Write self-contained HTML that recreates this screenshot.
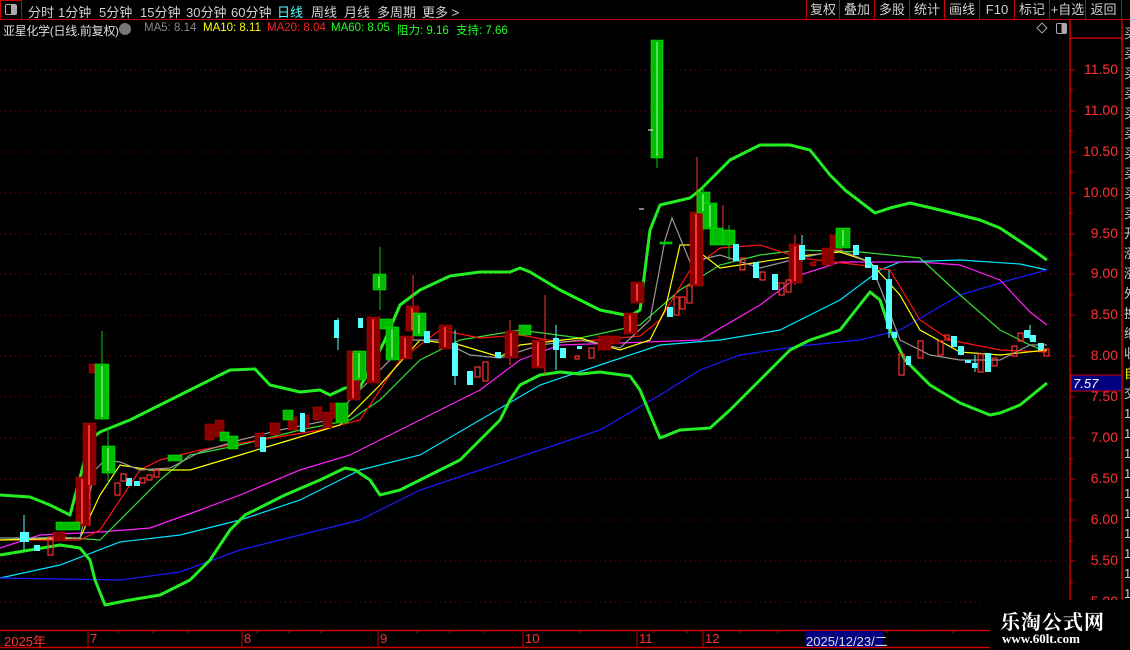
<!DOCTYPE html>
<html><head><meta charset="utf-8"><style>
*{margin:0;padding:0;box-sizing:border-box}
body{width:1130px;height:650px;background:#000;overflow:hidden;position:relative;font-family:"Liberation Sans","Noto Sans CJK SC",sans-serif;color:#c8c8c8}
.tb{position:absolute;left:0;top:0;width:1130px;height:20px;border-bottom:1px solid #c00}
.tb span{position:absolute;top:2px;font-size:13px;color:#d0d0d0}
.btn{position:absolute;top:0;height:19px;border-left:1px solid #c00;font-size:13px;color:#d0d0d0;text-align:center;line-height:19px}
.info{position:absolute;top:22px;font-size:11.5px;white-space:nowrap}
.ax{position:absolute;right:12px;font-size:14px;color:#ff3333;text-align:right;width:50px}
.bt{position:absolute;top:631px;font-size:13px;color:#ff3333}
</style></head><body>
<div class="tb">
<div style="position:absolute;left:0;top:0;width:22px;height:20px;border:1px solid #c00"></div>
<div style="position:absolute;left:5px;top:4px;width:12px;height:11px;border:1px solid #aaa;border-radius:2px;background:linear-gradient(90deg,#000 50%,#aaa 50%)"></div>
<span style="left:28px">分时</span><span style="left:58px">1分钟</span><span style="left:99px">5分钟</span><span style="left:140px">15分钟</span><span style="left:186px">30分钟</span><span style="left:231px">60分钟</span><span style="left:277px;color:#5ff">日线</span><span style="left:311px">周线</span><span style="left:344px">月线</span><span style="left:377px">多周期</span><span style="left:422px">更多 &gt;</span>
<div class="btn" style="left:806px;width:33px">复权</div><div class="btn" style="left:839px;width:35px">叠加</div><div class="btn" style="left:874px;width:35px">多股</div><div class="btn" style="left:909px;width:35px">统计</div><div class="btn" style="left:944px;width:35px">画线</div><div class="btn" style="left:979px;width:35px">F10</div><div class="btn" style="left:1014px;width:35px">标记</div><div class="btn" style="left:1049px;width:36px">+自选</div><div class="btn" style="left:1085px;width:37px;border-right:1px solid #c00">返回</div>
</div>
<div class="info" style="left:3px;color:#ddd;font-size:12px;top:22px;letter-spacing:-0.3px">亚星化学(日线.前复权)</div>
<div style="position:absolute;left:119px;top:23px;width:12px;height:12px;border-radius:50%;background:#777"></div>
<div class="info" style="left:144px;color:#888">MA5: 8.14</div>
<div class="info" style="left:203px;color:#ff0">MA10: 8.11</div>
<div class="info" style="left:267px;color:#f22">MA20: 8.04</div>
<div class="info" style="left:331px;color:#2f2">MA60: 8.05</div>
<div class="info" style="left:397px;color:#2f2">阻力: 9.16</div>
<div class="info" style="left:456px;color:#2f2">支持: 7.66</div>
<div style="position:absolute;left:1038px;top:24px;width:8px;height:8px;border:1px solid #aaa;transform:rotate(45deg)"></div>
<div style="position:absolute;left:1056px;top:23px;width:11px;height:11px;border:1px solid #aaa;border-radius:2px;background:linear-gradient(90deg,#000 50%,#aaa 50%)"></div>

<svg width="1130" height="650" style="position:absolute;left:0;top:0">
<g stroke="#900" stroke-dasharray="1,4" stroke-width="1">
<line x1="0" y1="70" x2="1070" y2="70"/><line x1="0" y1="111" x2="1070" y2="111"/><line x1="0" y1="152" x2="1070" y2="152"/><line x1="0" y1="193" x2="1070" y2="193"/><line x1="0" y1="234" x2="1070" y2="234"/><line x1="0" y1="274" x2="1070" y2="274"/><line x1="0" y1="315" x2="1070" y2="315"/><line x1="0" y1="356" x2="1070" y2="356"/><line x1="0" y1="397" x2="1070" y2="397"/><line x1="0" y1="438" x2="1070" y2="438"/><line x1="0" y1="479" x2="1070" y2="479"/><line x1="0" y1="520" x2="1070" y2="520"/><line x1="0" y1="561" x2="1070" y2="561"/><line x1="0" y1="602" x2="1070" y2="602"/>
</g>
<g stroke="#c00" stroke-width="1.5">
<line x1="1070" y1="20" x2="1070" y2="630"/><line x1="1122" y1="20" x2="1122" y2="650"/>
<line x1="0" y1="630.5" x2="1070" y2="630.5"/><line x1="0" y1="647.5" x2="990" y2="647.5"/>
<line x1="1070" y1="38" x2="1122" y2="38"/>
</g>
<g stroke="#c00">
<path d="M1070 70h5M1070 111h5M1070 152h5M1070 193h5M1070 234h5M1070 274h5M1070 315h5M1070 356h5M1070 397h5M1070 438h5M1070 479h5M1070 520h5M1070 561h5M1070 602h5M1070 90h3M1070 131h3M1070 172h3M1070 213h3M1070 254h3M1070 295h3M1070 336h3M1070 377h3M1070 418h3M1070 459h3M1070 500h3M1070 541h3M1070 582h3"/>
<path d="M88 630v17M242 630v17M378 630v17M523 630v17M637 630v17M703 630v17M118 630v3M153 630v3M188 630v3M257 630v3M289 630v3M321 630v3M417 630v3M450 630v3M483 630v3M580 630v3M608 630v3M654 630v3M687 630v3M740 630v3M778 630v3M887 630v3M920 630v3M953 630v3"/>
</g>
<g fill="none" stroke-width="1.2">
<polyline stroke="#00e5ff" points="0,578 60,565 120,542 180,535 240,520 300,500 360,470 420,455 480,420 540,385 600,365 660,345 720,340 780,330 840,300 880,270 900,262 960,260 1020,264 1047,270"/>
<polyline stroke="#1a1aff" points="0,578 120,580 180,572 240,550 300,535 360,520 420,490 480,470 540,450 600,430 660,395 700,370 740,355 800,346 860,340 900,330 960,295 1010,280 1047,270"/>
<polyline stroke="#f2f" points="0,548 40,535 100,532 150,528 200,510 240,495 300,470 350,455 400,430 440,410 480,390 520,360 560,345 620,343 700,340 760,305 800,275 840,262 880,262 920,262 960,265 1000,280 1030,312 1047,325"/>
<polyline stroke="#3d3" points="0,540 60,537 100,540 130,510 160,480 190,455 240,445 300,430 350,420 380,400 420,360 460,340 520,330 580,338 640,325 680,290 720,265 760,255 800,250 860,252 920,258 960,295 1000,330 1030,345 1047,352"/>
<polyline stroke="#f11" points="0,540 80,540 100,530 120,500 140,470 160,460 200,450 260,440 320,430 360,420 400,360 440,330 480,338 520,335 560,342 600,340 640,336 660,320 690,270 720,248 760,245 800,258 860,265 890,270 920,320 950,340 1000,350 1047,352"/>
<polyline stroke="#ff0" points="0,540 80,538 100,495 120,465 150,470 190,470 240,455 290,440 340,425 360,405 380,385 420,340 460,345 500,357 520,345 580,338 620,350 650,340 665,310 680,245 690,245 720,268 760,262 800,256 840,252 870,262 900,295 920,330 960,352 1000,355 1047,350"/>
<polyline stroke="#999" points="0,538 80,538 95,470 105,460 120,462 140,470 170,468 200,452 240,440 280,430 330,420 360,390 380,370 410,340 440,340 470,355 500,358 540,345 580,340 620,348 650,320 665,240 672,218 690,262 720,255 760,268 800,258 840,250 870,262 885,300 900,340 930,355 960,360 1000,360 1030,345 1047,345"/>
</g>
<g fill="none" stroke="#2e2" stroke-width="3" stroke-linejoin="round">
<polyline points="0,495 30,497 50,505 70,515 90,440 100,432 130,420 160,405 200,385 230,370 255,369 270,385 300,392 320,390 330,395 345,388 360,387 375,360 385,340 400,305 420,290 450,276 480,272 510,272 520,268 530,272 560,290 580,300 600,310 630,316 640,310 650,230 660,205 690,198 700,190 730,160 760,145 790,145 810,150 830,175 845,190 875,213 890,208 910,203 940,210 980,220 1000,228 1030,248 1047,260"/>
<polyline points="0,555 30,550 60,545 80,548 90,560 95,580 105,605 130,600 160,595 190,580 210,560 230,530 245,515 265,505 285,495 320,480 345,468 355,470 370,480 380,495 400,490 440,470 460,460 480,440 500,420 510,400 520,385 540,375 560,372 580,374 600,372 630,376 640,390 660,438 680,430 710,428 730,410 760,380 790,350 810,340 840,330 870,292 880,300 890,330 905,360 930,385 960,403 990,415 1000,413 1020,405 1047,383"/>
</g>
<g stroke-width="1">
<g stroke="#f33"><line x1="90" y1="423" x2="90" y2="526"/><line x1="413" y1="275" x2="413" y2="340"/><line x1="697" y1="157" x2="697" y2="286"/><line x1="510" y1="320" x2="510" y2="365"/><line x1="545" y1="295" x2="545" y2="375"/><line x1="723" y1="205" x2="723" y2="245"/><line x1="795" y1="235" x2="795" y2="285"/></g>
<g stroke="#0c0"><line x1="102" y1="331" x2="102" y2="420"/><line x1="108" y1="427" x2="108" y2="485"/><line x1="380" y1="247" x2="380" y2="310"/><line x1="657" y1="140" x2="657" y2="168"/><line x1="703" y1="185" x2="703" y2="232"/><line x1="729" y1="225" x2="729" y2="260"/></g>
<g stroke="#5ff"><line x1="24" y1="515" x2="24" y2="550"/><line x1="338" y1="318" x2="338" y2="350"/><line x1="455" y1="330" x2="455" y2="385"/><line x1="556" y1="325" x2="556" y2="370"/><line x1="889" y1="270" x2="889" y2="338"/><line x1="802" y1="235" x2="802" y2="262"/><line x1="975" y1="355" x2="975" y2="372"/><line x1="1030" y1="325" x2="1030" y2="340"/></g>
</g>
<g fill="#8a0000" stroke="#c00" stroke-width="0.5">
<rect x="53" y="532" width="12" height="9"/><rect x="76" y="477" width="13" height="49"/><rect x="83" y="423" width="13" height="62"/><rect x="89" y="364" width="7" height="9"/>
<rect x="205" y="424" width="9" height="16"/><rect x="215" y="420" width="9" height="17"/><rect x="255" y="433" width="9" height="14"/><rect x="270" y="423" width="10" height="12"/><rect x="288" y="417" width="9" height="13"/><rect x="300" y="415" width="9" height="13"/><rect x="313" y="407" width="9" height="13"/><rect x="323" y="412" width="9" height="16"/><rect x="330" y="403" width="8" height="15"/>
<rect x="347" y="351" width="13" height="49"/><rect x="367" y="317" width="13" height="66"/><rect x="399" y="336" width="13" height="23"/><rect x="406" y="306" width="13" height="25"/><rect x="439" y="325" width="13" height="24"/><rect x="505" y="331" width="13" height="27"/><rect x="532" y="340" width="13" height="28"/><rect x="598" y="336" width="13" height="14"/><rect x="612" y="336" width="8" height="8"/><rect x="624" y="313" width="13" height="21"/><rect x="631" y="282" width="13" height="21"/>
<rect x="690" y="212" width="13" height="74"/><rect x="789" y="244" width="13" height="39"/><rect x="822" y="248" width="12" height="17"/><rect x="830" y="235" width="12" height="15"/><rect x="810" y="262" width="6" height="4"/>
</g>
<g stroke="#ff3030" stroke-width="2">
<line x1="89" y1="425" x2="89" y2="485"/><line x1="82" y1="479" x2="82" y2="524"/><line x1="353" y1="353" x2="353" y2="398"/><line x1="373" y1="319" x2="373" y2="381"/><line x1="445" y1="327" x2="445" y2="347"/><line x1="511" y1="333" x2="511" y2="356"/><line x1="538" y1="342" x2="538" y2="366"/><line x1="696" y1="214" x2="696" y2="284"/><line x1="795" y1="246" x2="795" y2="281"/><line x1="412" y1="308" x2="412" y2="330"/><line x1="405" y1="338" x2="405" y2="358"/><line x1="630" y1="315" x2="630" y2="332"/><line x1="637" y1="284" x2="637" y2="301"/>
</g>
<g fill="#0b0" stroke="#0f0" stroke-width="0.5">
<rect x="95" y="364" width="14" height="55"/><rect x="102" y="446" width="13" height="27"/><rect x="56" y="522" width="24" height="8"/>
<rect x="168" y="455" width="14" height="6"/><rect x="220" y="432" width="9" height="9"/><rect x="228" y="436" width="10" height="13"/><rect x="283" y="410" width="10" height="10"/><rect x="336" y="403" width="12" height="20"/>
<rect x="353" y="351" width="13" height="29"/><rect x="373" y="274" width="13" height="16"/><rect x="380" y="319" width="13" height="10"/><rect x="386" y="327" width="13" height="33"/><rect x="413" y="313" width="13" height="23"/><rect x="519" y="325" width="12" height="10"/>
<rect x="651" y="40" width="12" height="118"/><rect x="697" y="192" width="13" height="21"/><rect x="703" y="203" width="14" height="26"/><rect x="710" y="228" width="13" height="17"/><rect x="723" y="230" width="12" height="15"/><rect x="836" y="228" width="14" height="20"/><rect x="660" y="242" width="12" height="2"/>
</g>
<g stroke="#8f8" stroke-width="1.2">
<line x1="102" y1="366" x2="102" y2="417"/><line x1="108" y1="448" x2="108" y2="471"/><line x1="657" y1="42" x2="657" y2="156"/><line x1="359" y1="353" x2="359" y2="378"/><line x1="392" y1="329" x2="392" y2="358"/><line x1="419" y1="315" x2="419" y2="334"/><line x1="703" y1="194" x2="703" y2="211"/><line x1="710" y1="205" x2="710" y2="227"/><line x1="843" y1="230" x2="843" y2="246"/><line x1="379" y1="276" x2="379" y2="288"/>
</g>
<g fill="#5ff">
<rect x="20" y="532" width="9" height="10"/><rect x="34" y="545" width="6" height="6"/><rect x="126" y="478" width="6" height="8"/><rect x="134" y="481" width="6" height="5"/><rect x="260" y="437" width="6" height="15"/><rect x="300" y="413" width="5" height="19"/><rect x="334" y="320" width="5" height="18"/><rect x="358" y="318" width="5" height="10"/>
<rect x="424" y="331" width="6" height="12"/><rect x="452" y="343" width="6" height="33"/><rect x="467" y="371" width="6" height="14"/><rect x="495" y="352" width="6" height="6"/><rect x="553" y="338" width="6" height="12"/><rect x="560" y="348" width="6" height="10"/><rect x="577" y="346" width="5" height="3"/>
<rect x="667" y="307" width="6" height="10"/><rect x="733" y="244" width="6" height="17"/><rect x="753" y="262" width="6" height="16"/><rect x="772" y="274" width="6" height="16"/><rect x="799" y="245" width="6" height="15"/><rect x="853" y="245" width="6" height="10"/><rect x="865" y="257" width="6" height="11"/><rect x="872" y="265" width="6" height="15"/><rect x="886" y="279" width="6" height="50"/><rect x="892" y="332" width="5" height="6"/><rect x="906" y="356" width="5" height="9"/><rect x="951" y="336" width="6" height="11"/><rect x="958" y="346" width="6" height="9"/><rect x="965" y="360" width="6" height="3"/><rect x="972" y="363" width="6" height="5"/><rect x="985" y="353" width="6" height="19"/><rect x="1024" y="330" width="6" height="8"/><rect x="1030" y="335" width="6" height="7"/><rect x="1038" y="343" width="6" height="7"/>
</g>
<g fill="none" stroke="#f33" stroke-width="1.2">
<rect x="48" y="537" width="5" height="18"/><rect x="115" y="483" width="5" height="12"/><rect x="121" y="474" width="5" height="7"/><rect x="140" y="478" width="5" height="5"/><rect x="147" y="475" width="5" height="5"/><rect x="154" y="470" width="5" height="7"/>
<rect x="475" y="367" width="5" height="10"/><rect x="483" y="362" width="5" height="19"/><rect x="575" y="356" width="4" height="3"/><rect x="589" y="348" width="5" height="10"/><rect x="674" y="297" width="5" height="18"/><rect x="680" y="297" width="5" height="12"/><rect x="687" y="286" width="5" height="17"/>
<rect x="740" y="258" width="5" height="12"/><rect x="760" y="272" width="5" height="8"/><rect x="779" y="283" width="5" height="12"/><rect x="786" y="280" width="5" height="12"/><rect x="899" y="354" width="5" height="21"/><rect x="918" y="341" width="5" height="17"/><rect x="938" y="341" width="5" height="14"/><rect x="945" y="335" width="4" height="5"/><rect x="978" y="354" width="5" height="18"/><rect x="992" y="358" width="5" height="8"/><rect x="1012" y="346" width="5" height="10"/><rect x="1018" y="333" width="5" height="8"/><rect x="1044" y="349" width="5" height="7"/>
</g>
<line x1="648" y1="130" x2="653" y2="130" stroke="#fff"/><line x1="639" y1="209" x2="644" y2="209" stroke="#fff"/>
<rect x="1071" y="375" width="51" height="16" fill="#000080" stroke="#c00"/>
<text x="1073" y="388" fill="#fff" font-size="13" font-family="Liberation Sans" font-style="italic">7.57</text>
<rect x="805" y="631" width="78" height="16" fill="#000080"/>
</svg>
<div class="ax" style="top:61px">11.50</div><div class="ax" style="top:102px">11.00</div><div class="ax" style="top:143px">10.50</div><div class="ax" style="top:184px">10.00</div><div class="ax" style="top:225px">9.50</div><div class="ax" style="top:265px">9.00</div><div class="ax" style="top:306px">8.50</div><div class="ax" style="top:347px">8.00</div><div class="ax" style="top:388px">7.50</div><div class="ax" style="top:429px">7.00</div><div class="ax" style="top:470px">6.50</div><div class="ax" style="top:511px">6.00</div><div class="ax" style="top:552px">5.50</div><div class="ax" style="top:593px;height:8px;overflow:hidden">5.00</div>
<div style="position:absolute;left:1124px;top:24px;font-size:13px;color:#ccc;line-height:20px;width:10px;overflow:hidden">买<br>买<br>买<br>买<br>买<br>买<br>买<br>买<br>买<br>买<br>开<br>涨<br>涨<br>外<br>换<br>缩<br>收<br><span style="color:#ff0">自</span><br>交<br>1<br>1<br>1<br>1<br>1<br>1<br>1<br>1<br>1<br>1</div>
<div class="bt" style="left:4px">2025年</div><div class="bt" style="left:90px">7</div><div class="bt" style="left:244px">8</div><div class="bt" style="left:380px">9</div><div class="bt" style="left:525px">10</div><div class="bt" style="left:639px">11</div><div class="bt" style="left:705px">12</div>
<div class="bt" style="left:806px;color:#ddd">2025/12/23/二</div>
<div style="position:absolute;left:990px;top:600px;width:140px;height:50px;background:#000"></div>
<div style="position:absolute;left:1000px;top:606px;font-family:'Noto Serif CJK SC','Liberation Serif',serif;font-weight:bold;font-size:20px;color:#fff;letter-spacing:1px">乐淘公式网</div>
<div style="position:absolute;left:1002px;top:631px;font-family:'Liberation Serif',serif;font-weight:bold;font-size:13px;color:#fff">www.60lt.com</div>
</body></html>
